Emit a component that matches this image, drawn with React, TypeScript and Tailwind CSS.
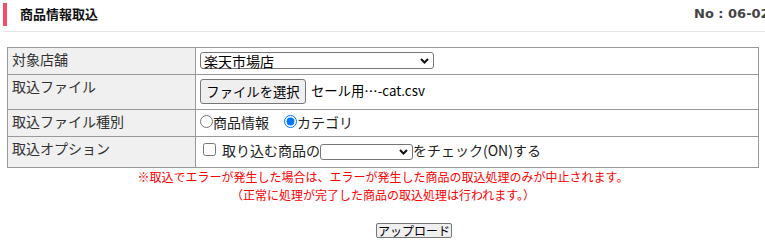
import React from 'react';

const cellLabel = "bg-[#f0f0f0] border-r border-[#999] pl-[4px] pt-[1px] leading-[20px] text-[14px] text-[#333]";

const Chevron = () => (
   <svg width="9" height="6" viewBox="0 0 9 6" className="shrink-0">
      <path d="M1 1 L4.5 4.5 L8 1" fill="none" stroke="#111" strokeWidth="2" />
   </svg>
);

// looks like a native <select>
const FakeSelect = ({ width, height, value }: { width: string; height: string; value?: string }) => (
   <div className={`flex items-center justify-between bg-white border border-[#767676] rounded-[3px] pl-[3px] pr-[4px] ${width} ${height}`}>
      <span className="text-[14px] leading-[14px] text-black whitespace-nowrap">{value}</span>
      <Chevron />
   </div>
);

export default function App() {
   return (
      <div className="w-[765px] h-[250px] overflow-hidden bg-white font-['Noto_Sans_CJK_JP','Noto_Sans',sans-serif] text-[#222]">
         {/* Header */}
         <div className="ml-[3px] w-[800px] h-[32px] border-b border-[#e5e5e5] flex items-start pt-[3px]">
            <div className="w-[691px] flex items-start">
               <div className="w-[4px] h-[23px] bg-[#f0506e]" />
               <div className="ml-[13px] mt-[1px] text-[13px] font-bold leading-[20px] text-[#111]">商品情報取込</div>
            </div>
            <div className="mt-[2px] whitespace-nowrap font-['DejaVu_Sans',sans-serif] text-[13px] font-bold leading-[18px] text-[#444]">No : 06-02</div>
         </div>

         {/* Form table */}
         <div className="mt-[15px] ml-[7px] w-[752px] border border-[#999]">
            <div className="grid grid-cols-[188px_1fr] h-[27px] border-b border-[#999]">
               <div className={cellLabel}>対象店舗</div>
               <div className="pl-[4px] pt-[4px]">
                  <FakeSelect width="w-[234px]" height="h-[17px]" value="楽天市場店" />
               </div>
            </div>
            <div className="grid grid-cols-[188px_1fr] h-[35px] border-b border-[#999]">
               <div className={cellLabel}>取込ファイル</div>
               <div className="pl-[4px] pt-[4px] flex items-start">
                  <button className="w-[106px] h-[25px] bg-[#efefef] border border-[#767676] rounded-[3px] text-[13.33px] leading-[20px] text-black">ファイルを選択</button>
                  <span className="ml-[5px] leading-[23px] text-[13.33px] text-black">セール用…-cat.csv</span>
               </div>
            </div>
            <div className="grid grid-cols-[188px_1fr] h-[27px] border-b border-[#999]">
               <div className={cellLabel}>取込ファイル種別</div>
               <div className="pl-[4px] pt-[1px] flex items-center h-[22px] text-[14px] text-[#222]">
                  <input type="radio" name="kind" className="w-[13px] h-[13px] m-0" />
                  <span className="leading-[20px]">商品情報</span>
                  <input type="radio" name="kind" defaultChecked className="ml-[15px] w-[13px] h-[13px] m-0" />
                  <span className="leading-[20px]">カテゴリ</span>
               </div>
            </div>
            <div className="grid grid-cols-[188px_1fr] h-[30px]">
               <div className={cellLabel}>取込オプション</div>
               <div className="pl-[4px] pt-[6px] flex items-start text-[14px] text-[#222]">
                  <input type="checkbox" className="ml-[3px] mt-[0px] w-[13px] h-[13px]" />
                  <span className="ml-[6px] leading-[15px]">取り込む商品の</span>
                  <div className="mt-[1px]">
                     <FakeSelect width="w-[93px]" height="h-[16px]" />
                  </div>
                  <span className="leading-[15px]">をチェック(ON)する</span>
               </div>
            </div>
         </div>

         {/* Notice */}
         <div className="ml-[7px] w-[752px] mt-[0px] text-center text-[12px] leading-[18px] text-[#ff0000]">
            <div>※取込でエラーが発生した場合は、エラーが発生した商品の取込処理のみが中止されます。</div>
            <div>（正常に処理が完了した商品の取込処理は行われます。）</div>
         </div>

         <div className="mt-[19px] ml-[376px] flex">
            <button className="w-[76px] h-[15px] bg-[#efefef] border border-[#767676] rounded-[2px] text-[12px] leading-[13px] text-black">アップロード</button>
         </div>
      </div>
   );
}
